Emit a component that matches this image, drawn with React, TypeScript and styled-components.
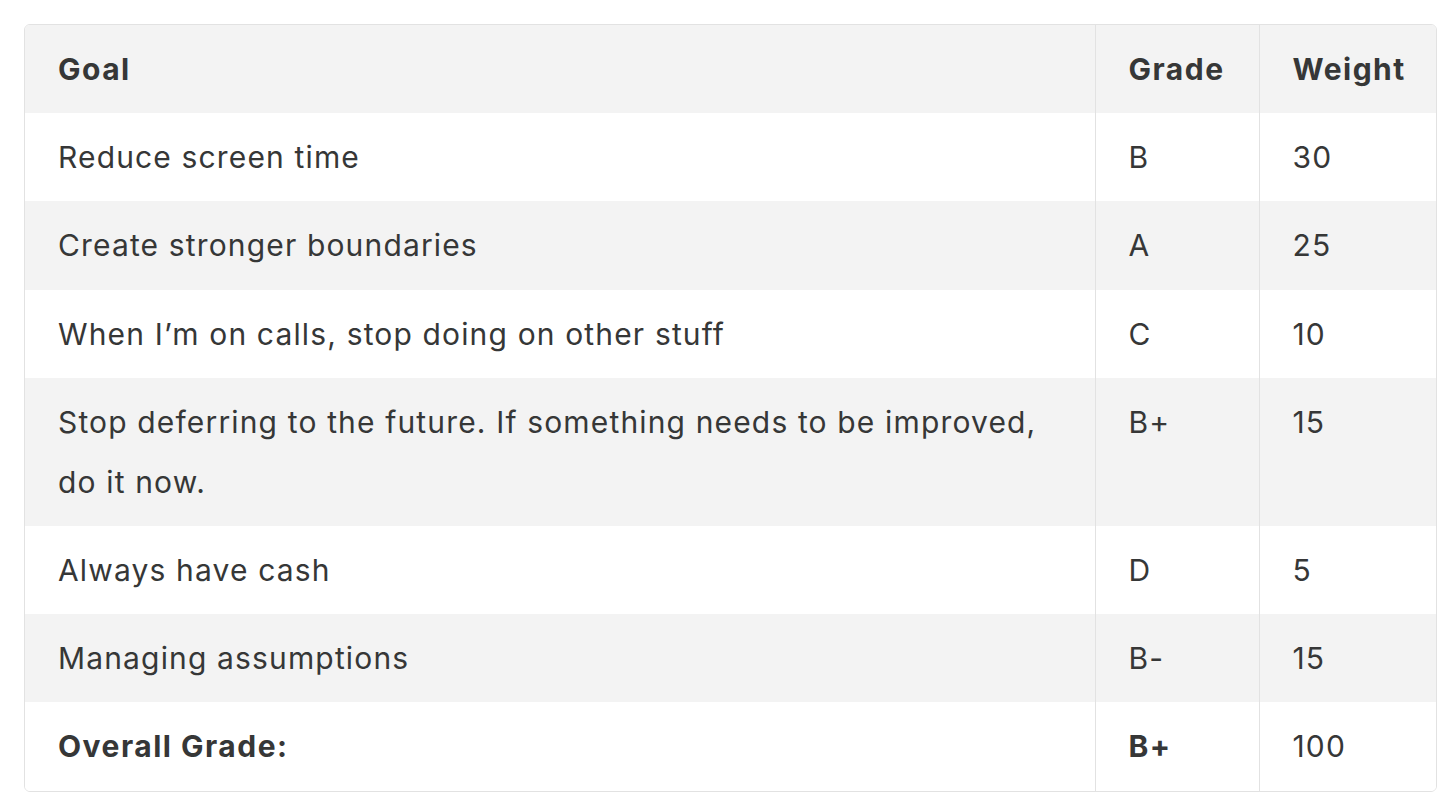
import React from "react";
import styled, { createGlobalStyle } from "styled-components";

const GlobalStyle = createGlobalStyle`
  html, body {
    margin: 0;
    padding: 0;
    background: #ffffff;
  }
`;

const Page = styled.div`
  padding: 24px 0 0 24px;
  font-family: Inter, "Liberation Sans", Arial, sans-serif;
  color: #363737;
`;

const Frame = styled.div`
  width: 1413px;
  border: 1px solid #e2e2e2;
  border-radius: 6px;
  overflow: hidden;
  box-sizing: border-box;
`;

const Table = styled.table`
  width: 100%;
  border-collapse: collapse;
  table-layout: fixed;
  font-size: 30px;
  line-height: 60px;
`;

const Row = styled.tr<{ $shaded?: boolean }>`
  background: ${(p) => (p.$shaded ? "#f3f3f3" : "#ffffff")};
`;

const Cell = styled.td<{ $bold?: boolean; $divider?: boolean }>`
  padding: 14px 33px 14.2px;
  vertical-align: top;
  text-align: left;
  font-weight: ${(p) => (p.$bold ? 700 : 400)};
  letter-spacing: ${(p) => (p.$bold ? "1.5px" : "1.15px")};
  border-left: ${(p) => (p.$divider ? "1px solid #e2e2e2" : "none")};
`;

const HeadCell = styled(Cell).attrs({ as: "th" })``;

type Goal = { goal: string; grade: string; weight: string };

const goals: Goal[] = [
  { goal: "Reduce screen time", grade: "B", weight: "30" },
  { goal: "Create stronger boundaries", grade: "A", weight: "25" },
  { goal: "When I\u2019m on calls, stop doing on other stuff", grade: "C", weight: "10" },
  {
    goal: "Stop deferring to the future. If something needs to be improved, do it now.",
    grade: "B+",
    weight: "15",
  },
  { goal: "Always have cash", grade: "D", weight: "5" },
  { goal: "Managing assumptions", grade: "B-", weight: "15" },
];

export default function App() {
  return (
    <>
      <GlobalStyle />
      <Page>
        <Frame>
          <Table>
            <colgroup>
              <col style={{ width: 1070 }} />
              <col style={{ width: 164 }} />
              <col />
            </colgroup>
            <thead>
              <Row $shaded>
                <HeadCell $bold>Goal</HeadCell>
                <HeadCell $bold $divider>Grade</HeadCell>
                <HeadCell $bold $divider>Weight</HeadCell>
              </Row>
            </thead>
            <tbody>
              {goals.map((g, i) => (
                <Row key={g.goal} $shaded={i % 2 === 1}>
                  <Cell>{g.goal}</Cell>
                  <Cell $divider>{g.grade}</Cell>
                  <Cell $divider>{g.weight}</Cell>
                </Row>
              ))}
              <Row>
                <Cell $bold>Overall Grade:</Cell>
                <Cell $bold $divider>B+</Cell>
                <Cell $divider>100</Cell>
              </Row>
            </tbody>
          </Table>
        </Frame>
      </Page>
    </>
  );
}
